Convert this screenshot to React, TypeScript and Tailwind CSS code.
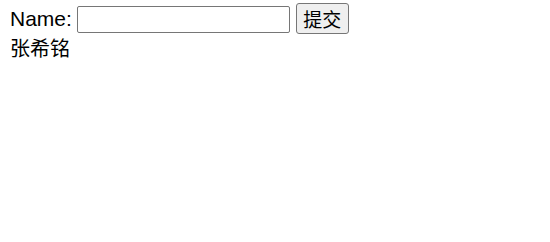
export default function App() {
  return (
    <div className="min-h-[242px] w-[550px] bg-white pl-[10px] pt-[3px] text-black">
      <form className="flex items-start" onSubmit={(e) => e.preventDefault()}>
        <label
          htmlFor="name"
          className="mt-[4px] text-[21px] leading-[24px]"
          style={{ fontFamily: '"Liberation Sans", Arial, sans-serif' }}
        >
          Name:
        </label>
        <input
          id="name"
          type="text"
          className="ml-[5px] mt-[3px] h-[27px] w-[213px] rounded-[2px] border border-[#767676] bg-white px-[3px] text-[16px] outline-none"
        />
        <button
          type="submit"
          className="ml-[6px] h-[31px] w-[53px] rounded-[3px] border border-[#767676] bg-[#efefef] text-[19px] leading-none"
          style={{ fontFamily: '"Noto Sans CJK SC", sans-serif' }}
        >
          提交
        </button>
      </form>
      <div
        className="mt-[4px] text-[20px] leading-[20px]"
        style={{ fontFamily: '"Noto Sans CJK SC", sans-serif' }}
      >
        张希铭
      </div>
    </div>
  );
}
